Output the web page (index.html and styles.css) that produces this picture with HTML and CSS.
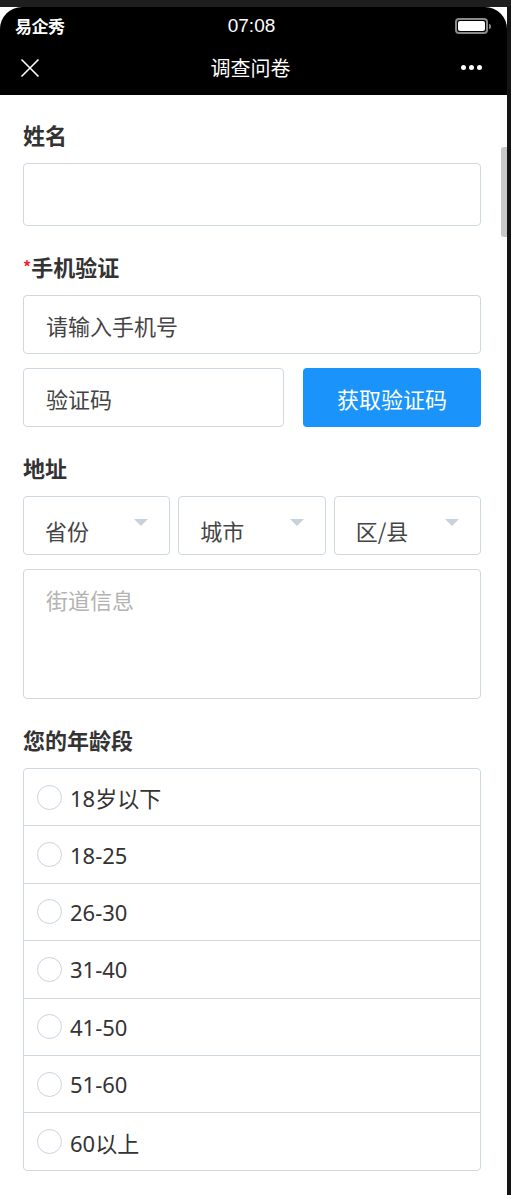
FILE: index.html
```html
<!DOCTYPE html>
<html lang="zh-CN">
<head>
    <meta charset="UTF-8">
    <meta name="viewport" content="width=device-width, initial-scale=1.0">
    <title>调查问卷</title>
    <link rel="stylesheet" href="styles.css">
</head>
<body>
    <div class="top-strip"></div>
    <div class="device">
        <div class="screen">
            <header class="appbar">
                <div class="status">
                    <span class="carrier">易企秀</span>
                    <span class="clock">07:08</span>
                    <span class="battery"><span class="battery-level"></span></span>
                </div>
                <div class="nav">
                    <svg class="close" width="20" height="20" viewBox="0 0 20 20">
                        <path d="M1.5 1.5 L18.5 18.5 M18.5 1.5 L1.5 18.5" stroke="#fff" stroke-width="1.6" fill="none"/>
                    </svg>
                    <h1 class="nav-title">调查问卷</h1>
                    <span class="more"><i></i><i></i><i></i></span>
                </div>
            </header>

            <form class="survey">
                <div class="field">
                    <label class="label">姓名</label>
                    <div class="input tall"></div>
                </div>

                <div class="field">
                    <label class="label"><span class="req">*</span>手机验证</label>
                    <div class="input">请输入手机号</div>
                    <div class="code-row">
                        <div class="input">验证码</div>
                        <button type="button" class="btn-code">获取验证码</button>
                    </div>
                </div>

                <div class="field">
                    <label class="label">地址</label>
                    <div class="selects">
                        <div class="select">省份<span class="caret"></span></div>
                        <div class="select">城市<span class="caret"></span></div>
                        <div class="select">区/县<span class="caret"></span></div>
                    </div>
                    <div class="textarea">街道信息</div>
                </div>

                <div class="field">
                    <label class="label">您的年龄段</label>
                    <div class="options">
                        <div class="option"><span class="radio"></span>18岁以下</div>
                        <div class="option"><span class="radio"></span>18-25</div>
                        <div class="option"><span class="radio"></span>26-30</div>
                        <div class="option"><span class="radio"></span>31-40</div>
                        <div class="option"><span class="radio"></span>41-50</div>
                        <div class="option"><span class="radio"></span>51-60</div>
                        <div class="option"><span class="radio"></span>60以上</div>
                    </div>
                </div>
            </form>

            <div class="scroll-thumb"></div>
        </div>
    </div>
</body>
</html>
```

FILE: styles.css
```css
/* Reset */
* {
    margin: 0;
    padding: 0;
    box-sizing: border-box;
}

body {
    font-family: "Noto Sans", "Noto Sans CJK SC", sans-serif;
    background-color: #fff;
    color: #333;
}

.top-strip {
    height: 7px;
    background-color: #1e1e1e;
}

/* Phone frame */
.device {
    width: 511px;
    min-height: calc(100vh - 7px);
    border-right: 4px solid #141414;
    background-color: #fff;
}

.screen {
    position: relative;
}

/* Black app header */
.appbar {
    background-color: #000;
    border-radius: 22px 22px 0 0;
    color: #fff;
}

.status {
    height: 37px;
    display: grid;
    grid-template-columns: 1fr auto 1fr;
    align-items: center;
    padding: 0 19px 0 15px;
}

.carrier {
    font-family: "Noto Sans CJK SC", sans-serif;
    font-size: 17px;
    font-weight: bold;
    letter-spacing: -0.5px;
}

.clock {
    font-family: "Liberation Sans", sans-serif;
    font-size: 19px;
}

.battery {
    justify-self: end;
    position: relative;
    width: 33px;
    height: 16px;
    border: 2px solid #8a8a8a;
    border-radius: 4px;
    padding: 1px;
}

.battery::after {
    content: "";
    position: absolute;
    right: -5px;
    top: 4px;
    width: 2px;
    height: 5px;
    background-color: #8a8a8a;
    border-radius: 0 2px 2px 0;
}

.battery-level {
    display: block;
    height: 100%;
    background-color: #fff;
    border-radius: 2px;
}

.nav {
    height: 51px;
    display: flex;
    align-items: center;
    justify-content: space-between;
    padding: 0 25px 4px 20px;
}

.nav-title {
    font-family: "Noto Sans CJK SC", sans-serif;
    font-size: 20px;
    font-weight: normal;
}

.more {
    display: flex;
    gap: 3px;
}

.more i {
    width: 5px;
    height: 5px;
    border-radius: 50%;
    background-color: #fff;
}

/* Form */
.survey {
    padding: 24px 26px 20px 23px;
}

.field {
    margin-bottom: 25px;
}

.label {
    display: block;
    height: 30px;
    font-family: "Noto Sans CJK SC", sans-serif;
    font-size: 22px;
    font-weight: bold;
    line-height: 30px;
    color: #333;
    margin-bottom: 14px;
}

.req {
    color: #f5222d;
    font-size: 16px;
    vertical-align: top;
}

.input, .select, .textarea {
    border: 1px solid #cfd7df;
    border-radius: 4px;
    background-color: #fff;
    font-family: "Noto Sans CJK SC", sans-serif;
    font-size: 22px;
    color: #444;
}

.input {
    height: 59px;
    display: flex;
    align-items: center;
    padding: 0 22px;
}

.input.tall {
    height: 63px;
}

.code-row {
    display: grid;
    grid-template-columns: 261px 1fr;
    gap: 19px;
    margin-top: 14px;
}

.btn-code {
    height: 59px;
    border: none;
    border-radius: 4px;
    background-color: #1a94fb;
    color: #fff;
    font-family: "Noto Sans CJK SC", sans-serif;
    font-size: 22px;
}

.selects {
    display: grid;
    grid-template-columns: repeat(3, 1fr);
    gap: 8px;
}

.select {
    position: relative;
    height: 59px;
    display: flex;
    align-items: center;
    padding: 8px 21px 0;
}

.caret {
    position: absolute;
    right: 21px;
    top: 22px;
    width: 0;
    height: 0;
    border-left: 7px solid transparent;
    border-right: 7px solid transparent;
    border-top: 7px solid #c8d2dc;
}

.textarea {
    height: 130px;
    margin-top: 14px;
    padding: 12px 22px;
    color: #b3b3b3;
    line-height: 34px;
}

/* Radio list */
.options {
    border: 1px solid #cfd7df;
    border-radius: 4px;
}

.option {
    height: 56.4px;
    display: flex;
    align-items: center;
    gap: 8px;
    padding-left: 13px;
    font-size: 22px;
    color: #333;
}

.option + .option {
    border-top: 1px solid #cfd7df;
    height: 57.4px;
}

.radio {
    width: 25px;
    height: 25px;
    border: 1.5px solid #cbd4dd;
    border-radius: 50%;
    flex-shrink: 0;
}

/* Scrollbar */
.scroll-thumb {
    position: absolute;
    right: 0;
    top: 140px;
    width: 6px;
    height: 90px;
    background-color: #c8c8c8;
    border-radius: 3px 0 0 3px;
}
```
